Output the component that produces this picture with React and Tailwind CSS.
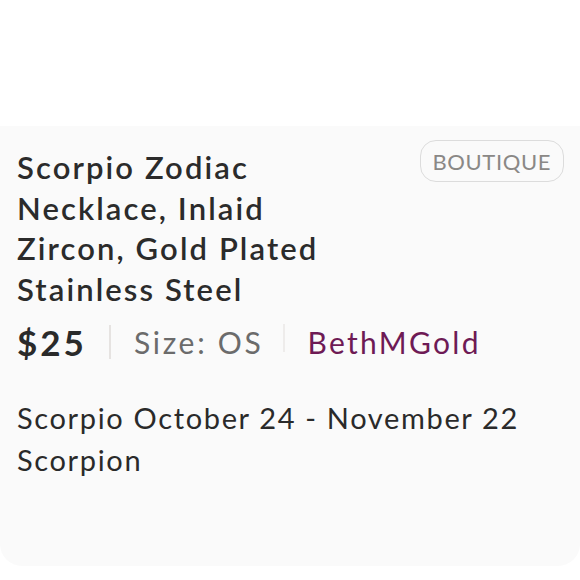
export default function App() {
  return (
    <div className="w-[580px] h-[580px] overflow-hidden bg-white flex flex-col" style={{ fontFamily: 'Lato, "Open Sans", sans-serif' }}>
      <div className="h-[126px] shrink-0 bg-white" />
      <div className="h-[440px] shrink-0 bg-[#fafafa] rounded-b-[22px] px-[17px] pt-[14px]">
        <div className="flex justify-between items-start">
          <h1 className="mt-[7px] text-[31px] leading-[40.5px] font-semibold text-[#2b2b2b] tracking-[2.1px]">
            Scorpio Zodiac<br />Necklace, Inlaid<br />Zircon, Gold Plated<br />Stainless Steel
          </h1>
          <div className="mr-[-1px] h-[42px] px-[12px] flex items-center rounded-[16px] border border-[#dcdcdc] text-[22px] text-[#8a8886] tracking-[0.6px]">
            BOUTIQUE
          </div>
        </div>
        <div className="mt-[13px] flex items-center h-[40px]">
          <span className="text-[35px] font-bold text-[#2a2a2a] tracking-[3px]">$25</span>
          <span className="ml-[22px] mr-[23px] w-[2px] h-[34px] bg-[#e6e3e1]" />
          <span className="text-[30px] text-[#6b6b6b] tracking-[2.7px]">Size: OS</span>
          <span className="ml-[20px] mr-[22px] w-[2px] h-[28px] bg-[#eeeceb] -mt-[8px]" />
          <span className="text-[30px] text-[#6e1a55] tracking-[2.3px]">BethMGold</span>
        </div>
        <p className="mt-[35px] text-[29px] leading-[42px] text-[#2a2a2a] tracking-[1.65px]">
          Scorpio October 24 - November 22<br />Scorpion
        </p>
      </div>
      <div className="flex-1 bg-white px-[17px] overflow-hidden">
        <div className="mt-[10px] text-[24px] text-[#9a9a9a] leading-[30px] whitespace-nowrap">Scorpio Zodiac Necklace Inlaid Zircon Gold</div>
      </div>
    </div>
  );
}
